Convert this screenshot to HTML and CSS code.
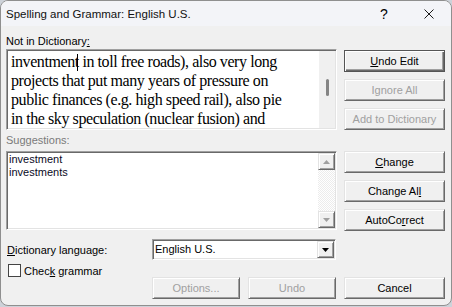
FILE: index.html
```html
<!DOCTYPE html>
<html>
  <head>
    <title>Spelling and Grammar</title>
    <link rel="stylesheet" href="styles.css">
  </head>
  <body>
    <div class="dialog">
      <div class="titlebar">
        <span class="title">Spelling and Grammar: English U.S.</span>
        <span class="caption-btn help">?</span>
        <span class="caption-btn close">
          <svg width="10" height="10" viewBox="0 0 10 10"><path d="M0.5 0.5 L9.5 9.5 M9.5 0.5 L0.5 9.5" stroke="#1a1a1a" stroke-width="1" fill="none"/></svg>
        </span>
      </div>

      <div class="top">
        <div class="left">
          <div class="label">Not in Dictionary<u>:</u></div>
          <div class="field sentence">
            <div class="sentence-text">
              <div>inventment<span class="caret"></span> in toll free roads), also very long</div>
              <div>projects that put many years of pressure on</div>
              <div>public finances (e.g. high speed rail), also pie</div>
              <div>in the sky speculation (nuclear fusion) and</div>
            </div>
            <div class="thin-scroll"><div class="thumb"></div></div>
          </div>

          <div class="label muted spaced">Suggestions:</div>
          <div class="field list">
            <div class="list-items">
              <div>investment</div>
              <div>investments</div>
            </div>
            <div class="scrollbar">
              <div class="scroll-btn">
                <svg width="7" height="4" viewBox="0 0 7 4"><polygon points="0,4 7,4 3.5,0" fill="#a0a0a0"/></svg>
              </div>
              <div class="track"></div>
              <div class="scroll-btn">
                <svg width="7" height="4" viewBox="0 0 7 4"><polygon points="0,0 7,0 3.5,4" fill="#a0a0a0"/></svg>
              </div>
            </div>
          </div>
        </div>

        <div class="actions">
          <div class="btn default"><u>U</u>ndo Edit</div>
          <div class="btn disabled">Ignore All</div>
          <div class="btn disabled">Add to Dictionary</div>
          <div class="btn group"><u>C</u>hange</div>
          <div class="btn">Change Al<u>l</u></div>
          <div class="btn">AutoCo<u>r</u>rect</div>
        </div>
      </div>

      <div class="bottom">
        <div class="dict-label"><u>D</u>ictionary language:</div>
        <div class="field select">
          <div class="select-text">English U.S.</div>
          <div class="scroll-btn drop">
            <svg width="7" height="4" viewBox="0 0 7 4"><polygon points="0,0 7,0 3.5,4" fill="#000"/></svg>
          </div>
        </div>
        <div class="check">
          <span class="box"></span>
          <span>Chec<u>k</u> grammar</span>
        </div>
        <div class="btn disabled opt">Options...</div>
        <div class="btn disabled undo">Undo</div>
        <div class="btn cancel">Cancel</div>
      </div>
    </div>
  </body>
</html>
```

FILE: styles.css
```css
body {
  margin: 0;
  background: #cdd2d9;
  font-family: "Liberation Sans", Arial, sans-serif;
  font-size: 11px;
  color: #000;
}

.dialog {
  width: 452px;
  height: 306px;
  box-sizing: border-box;
  border: 1px solid #8f8f8f;
  border-radius: 8px;
  background: #f0f0f0;
  overflow: hidden;
}

.titlebar {
  display: flex;
  align-items: center;
  height: 25px;
  background: #f3f4f8;
}

.title {
  flex: 1;
  padding-left: 5px;
  font-size: 11.5px;
  color: #111;
}

.caption-btn {
  display: flex;
  align-items: center;
  justify-content: center;
  height: 25px;
}

.help {
  width: 46px;
  font-size: 14px;
}

.close {
  width: 44px;
}

u {
  text-decoration: underline;
  text-underline-offset: 1px;
}

/* top part */
.top {
  display: flex;
  gap: 7px;
  padding-left: 5px;
}

.left {
  width: 331px;
  padding-top: 9px;
}

.label {
  height: 13px;
  line-height: 13px;
  margin-bottom: 1px;
}

.label.muted {
  color: #7a7a7a;
}

.label.spaced {
  margin-top: 4px;
  margin-bottom: 4px;
}

.field {
  box-sizing: border-box;
  border: 1px solid;
  border-color: #a0a0a0 #fff #fff #a0a0a0;
  box-shadow: inset 1px 1px #696969, inset -1px -1px #e3e3e3;
  padding: 1px;
  background: #fff;
}

.sentence {
  display: flex;
  height: 81px;
}

.sentence-text {
  flex: 1;
  padding: 1px 0 0 3px;
  font-family: "Liberation Serif", "Times New Roman", serif;
  font-size: 16px;
  line-height: 19px;
  letter-spacing: -0.42px;
  white-space: nowrap;
  overflow: hidden;
}

.caret {
  display: inline-block;
  width: 1px;
  height: 17px;
  margin-left: -2px;
  margin-right: 1px;
  background: #000;
  vertical-align: -4px;
}

.thin-scroll {
  width: 16px;
  background: #f0f0f0;
}

.thumb {
  width: 3px;
  height: 17px;
  margin: 28px 0 0 7px;
  border-radius: 2px;
  background: #858585;
}

.list {
  display: flex;
  height: 79px;
}

.list-items {
  flex: 1;
  padding-left: 1px;
  line-height: 13px;
  color: #0a0a1e;
}

.scrollbar {
  display: flex;
  flex-direction: column;
  width: 17px;
}

.track {
  flex: 1;
  background: repeating-conic-gradient(#fff 0 25%, #ececec 0 50%) 0 0 / 2px 2px;
}

.scroll-btn {
  box-sizing: border-box;
  display: flex;
  align-items: center;
  justify-content: center;
  width: 17px;
  height: 17px;
  background: #f0f0f0;
  border: 1px solid;
  border-color: #e3e3e3 #696969 #696969 #e3e3e3;
  box-shadow: inset 1px 1px #fff, inset -1px -1px #a0a0a0;
}

/* buttons */
.actions {
  display: flex;
  flex-direction: column;
  gap: 7px;
  width: 101px;
  padding-top: 24px;
}

.btn {
  box-sizing: border-box;
  height: 22px;
  line-height: 20px;
  text-align: center;
  background: #f0f0f0;
  border: 1px solid;
  border-color: #e3e3e3 #696969 #696969 #e3e3e3;
  box-shadow: inset 1px 1px #fff, inset -1px -1px #a0a0a0;
  white-space: nowrap;
}

.btn.default {
  border-color: #555;
  box-shadow: inset 1px 1px #fff, inset -1px -1px #696969, inset -2px -2px #a0a0a0;
}

.btn.disabled {
  color: #a0a0a0;
}

.btn.group {
  margin-top: 14px;
}

/* bottom part */
.bottom {
  display: grid;
  grid-template-columns: 138px 88px 88px 101px;
  grid-template-rows: 21px 17px 22px;
  column-gap: 8px;
  padding-left: 5px;
  margin-top: 8px;
}

.dict-label {
  grid-column: 1;
  grid-row: 1;
  align-self: center;
  padding-left: 1px;
}

.select {
  grid-column: 2 / span 2;
  grid-row: 1;
  display: flex;
  height: 21px;
}

.select-text {
  flex: 1;
  padding-left: 1px;
  line-height: 17px;
}

.check {
  grid-column: 1;
  grid-row: 2;
  align-self: end;
  display: flex;
  align-items: center;
  gap: 3px;
  height: 13px;
  padding-left: 2px;
}

.box {
  box-sizing: border-box;
  width: 13px;
  height: 13px;
  border: 1px solid #444;
  background: #fff;
}

.opt {
  grid-column: 2;
  grid-row: 3;
}

.undo {
  grid-column: 3;
  grid-row: 3;
}

.cancel {
  grid-column: 4;
  grid-row: 3;
}
```
